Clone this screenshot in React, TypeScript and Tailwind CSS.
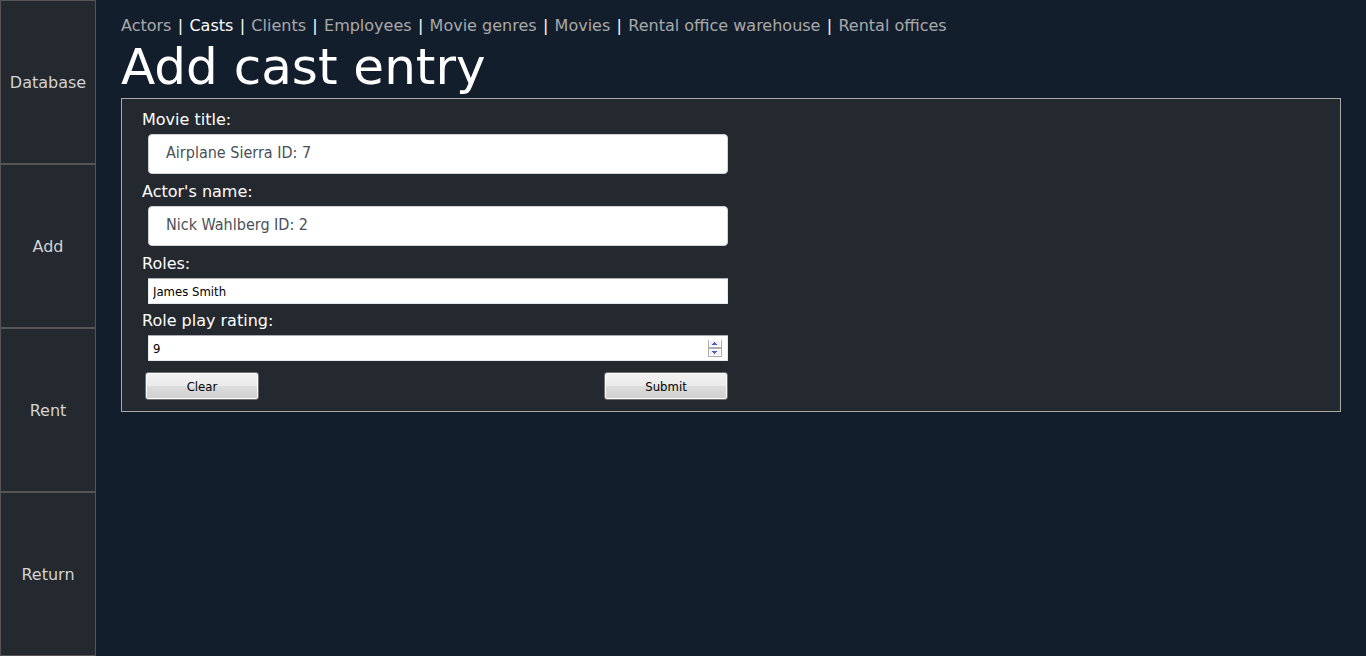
const links = ["Actors", "Casts", "Clients", "Employees", "Movie genres", "Movies", "Rental office warehouse", "Rental offices"];
const sections = ["Database", "Add", "Rent", "Return"];

const labelClass = "block h-8 pt-1 pl-5 text-base leading-7 text-white";
const selectClass =
  "block h-10 w-full appearance-none rounded-sm border border-[#ced4da] bg-white px-[17px] pb-[3px] font-['DejaVu_Sans_Condensed','Noto_Sans',sans-serif] text-base leading-6 text-[#495057]";
const inputClass =
  "block h-[26px] w-full appearance-none rounded-[1px] border border-[#e3e9ef] border-t-[#abadb3] bg-white px-1 font-['DejaVu_Sans_Condensed','Noto_Sans',sans-serif] text-[13px] text-black";
const buttonClass =
  "h-7 rounded-[3px] border border-[#707070] bg-[linear-gradient(#f2f2f2,#ebebeb_50%,#dddddd_50%,#cfcfcf)] pt-0.5 font-['DejaVu_Sans_Condensed','Noto_Sans',sans-serif] text-[13px] text-black shadow-[inset_0_0_0_1px_#fcfcfc]";

function Spinner() {
  return (
    <svg className="pointer-events-none absolute top-[5px] right-[6px] h-[17px] w-[14px]" viewBox="0 0 14 17" shapeRendering="crispEdges" aria-hidden="true">
      <path d="M0 0h1v17H0zM13 0h1v17h-1zM1 7h12v2H1zM1 16h12v1H1z" fill="#abadb3" />
      <path d="M2 1h10v5H2zM2 10h10v5H2z" fill="#f0f0f0" />
      <path d="M6 2h1v1h1v1h1v1H4V4h1V3h1z" fill="#4b62b8" />
      <path d="M4 11h5v1H8v1H7v1H6v-1H5v-1H4z" fill="#4b62b8" />
    </svg>
  );
}

export default function App() {
  return (
    <div className="flex min-h-screen bg-[#131e2d] font-['DejaVu_Sans',sans-serif] text-base text-white">
      <nav aria-label="Sections" className="flex w-24 shrink-0 flex-col">
        {sections.map((name) => (
          <a key={name} href="#" className="flex flex-1 items-center justify-center border border-[#555555] bg-[#24292f] pt-0.5 text-[#d3d3d3]">
            {name}
          </a>
        ))}
      </nav>
      <main className="min-w-0 flex-1 pt-[14px] pr-[25px] pl-[25px]">
        <nav aria-label="Tables" className="flex flex-wrap leading-6">
          {links.map((name, i) => (
            <span key={name} className="flex">
              {i > 0 && <span className="w-[18px] text-center">|</span>}
              <a href="#" className={name === "Casts" ? "text-white" : "text-[#a9a9a9]"}>
                {name}
              </a>
            </span>
          ))}
        </nav>
        <h1 className="h-[60px] text-[50px] leading-[58px]">Add cast entry</h1>
        <form className="border border-[#a9a9a9] bg-[#24292f] pt-[3px] pb-[11px]" onSubmit={(e) => e.preventDefault()}>
          <div className="w-1/2 pr-[3px]">
            <label htmlFor="movie" className={labelClass}>Movie title:</label>
            <div className="pl-[26px]">
              <select id="movie" className={selectClass}>
                <option>Airplane Sierra ID: 7</option>
              </select>
            </div>
            <label htmlFor="actor" className={labelClass}>Actor's name:</label>
            <div className="pl-[26px]">
              <select id="actor" className={selectClass}>
                <option>Nick Wahlberg ID: 2</option>
              </select>
            </div>
            <label htmlFor="roles" className={labelClass}>Roles:</label>
            <div className="pl-[26px]">
              <input id="roles" type="text" defaultValue="James Smith" className={inputClass} />
            </div>
            <label htmlFor="rating" className="block h-[31px] pt-[3px] pl-5 text-base leading-7 text-white">Role play rating:</label>
            <div className="relative ml-[26px]">
              <input
                id="rating"
                type="number"
                defaultValue={9}
                className={`${inputClass} [appearance:textfield] [&::-webkit-inner-spin-button]:appearance-none`}
              />
              <Spinner />
            </div>
            <div className="mt-[11px] flex justify-between pl-[23px]">
              <button type="reset" className={`${buttonClass} w-[114px]`}>Clear</button>
              <button type="submit" className={`${buttonClass} w-[124px]`}>Submit</button>
            </div>
          </div>
        </form>
      </main>
    </div>
  );
}
